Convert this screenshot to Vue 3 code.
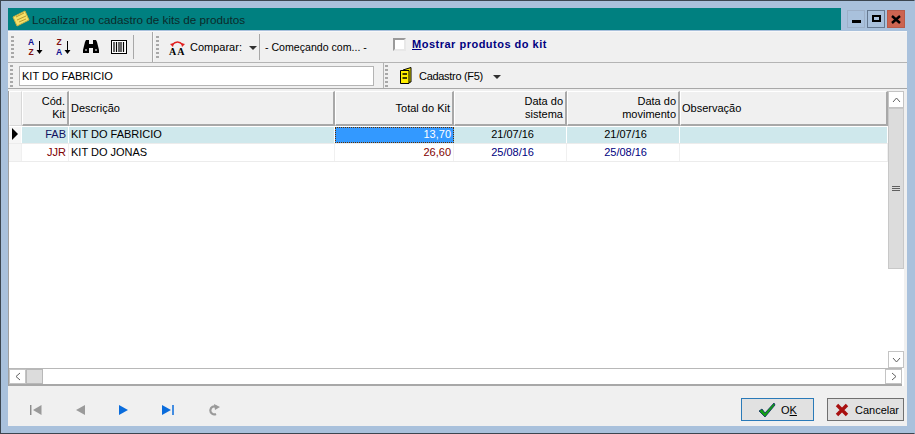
<script setup>
const columns = [
  { key: 'cod', label: ['Cód.', 'Kit'], align: 'right' },
  { key: 'desc', label: ['Descrição'], align: 'left' },
  { key: 'total', label: ['Total do Kit'], align: 'right' },
  { key: 'sis', label: ['Data do', 'sistema'], align: 'right' },
  { key: 'mov', label: ['Data do', 'movimento'], align: 'right' },
  { key: 'obs', label: ['Observação'], align: 'left' }
];

const rows = [
  { cod: 'FAB', desc: 'KIT DO FABRICIO', total: '13,70', sis: '21/07/16', mov: '21/07/16', selected: true },
  { cod: 'JJR', desc: 'KIT DO JONAS', total: '26,60', sis: '25/08/16', mov: '25/08/16', selected: false }
];
</script>

<template>
  <div class="window">
    <div class="titlebar">
      <div class="title">
        <svg class="title-icon" width="18" height="18" viewBox="0 0 18 18">
          <path d="M1 7 L13 1 L17 10 L5 16 Z" fill="#f4e06a" stroke="#c9b040" stroke-width="1" />
          <path d="M4 7 L12 3 M5 10 L14 6 M7 12 L14 9" stroke="#b89a30" stroke-width="1" />
        </svg>
        <span>Localizar no cadastro de kits de produtos</span>
      </div>
      <div class="win-buttons">
        <div class="win-btn"><span class="glyph-min"></span></div>
        <div class="win-btn active"><span class="glyph-max"></span></div>
        <div class="win-btn close">
          <svg width="10" height="9" viewBox="0 0 10 9"><path d="M1 1 L9 8 M9 1 L1 8" stroke="#000" stroke-width="2.4" /></svg>
        </div>
      </div>
    </div>

    <div class="client">
      <div class="toolbar-one">
        <div class="band band-sort">
          <span class="grip"></span>
          <div class="sort-icons">
            <div class="az-icon">
              <div class="az"><span class="blue">A</span><span class="red">Z</span></div>
              <svg width="7" height="15" viewBox="0 0 7 15"><path d="M3.500 1 V11" stroke="#000" /><path d="M0.500 10 H6.500 L3.500 14 Z" fill="#000" /></svg>
            </div>
            <div class="az-icon">
              <div class="az"><span class="red">Z</span><span class="blue">A</span></div>
              <svg width="7" height="15" viewBox="0 0 7 15"><path d="M3.500 1 V11" stroke="#000" /><path d="M0.500 10 H6.500 L3.500 14 Z" fill="#000" /></svg>
            </div>
            <svg width="16" height="14" viewBox="0 0 16 14">
              <path d="M2 2 L3 0 H6 V4 H10 V0 H13 L14 2 L16 10 V13 H10 V8 H6 V13 H0 V10 Z" fill="#000" />
              <path d="M2 10 H4 M12 10 H14" stroke="#fff" />
            </svg>
            <svg width="16" height="14" viewBox="0 0 16 14">
              <rect x="0.5" y="0.5" width="15" height="13" fill="#fff" stroke="#000" />
              <path d="M3 2 V12 M5.5 2 V12 M8 2 V12 M10 2 V12 M12.5 2 V12" stroke="#000" stroke-width="1.2" />
            </svg>
          </div>
        </div>
        <div class="band band-compare">
          <span class="grip"></span>
          <svg class="compare-icon" width="17" height="17" viewBox="0 0 17 17">
            <path d="M3 6 Q8.500 0 14 6" fill="none" stroke="#e02020" stroke-width="1.3" />
            <path d="M1 5 L5 4 L4 8 Z M16 5 L12 4 L13 8 Z" fill="#e02020" />
            <text x="0" y="16" class="aa">A<tspan dx="1">A</tspan></text>
          </svg>
          <span class="compare-label">Comparar:</span>
          <span class="caret compare-caret"></span>
          <span class="divider"></span>
          <span class="compare-mode">- Começando com... -</span>
        </div>
        <label class="check-wrap">
          <span class="check"></span>
          <span class="check-label"><u>M</u>ostrar produtos do kit</span>
        </label>
      </div>

      <div class="toolbar-two">
        <div class="search-band">
          <span class="grip"></span>
          <input class="search" type="text" value="KIT DO FABRICIO" />
        </div>
        <div class="cadastro-band">
          <span class="grip"></span>
          <svg class="cad-icon" width="13" height="17" viewBox="0 0 13 17">
            <path d="M3 3 L11 0.5 V15 L3 16.5 Z" fill="#f2e500" stroke="#000" />
            <path d="M0.5 3.5 H9 V16.5 H0.5 Z" fill="#ffee00" stroke="#000" />
            <path d="M2.5 7 H7 M2.5 11 H7" stroke="#000" stroke-width="1.4" />
          </svg>
          <span class="cad-label">Cadastro (F5)</span>
          <span class="caret"></span>
        </div>
      </div>

      <div class="grid-frame">
        <div class="grid-main">
          <div class="grid-table">
            <div class="grid-row header">
              <div class="indicator head-cell"></div>
              <div v-for="col in columns" :key="col.key" class="head-cell" :class="col.align">
                <span v-for="line in col.label" :key="line">{{ line }}</span>
              </div>
            </div>
            <div v-for="row in rows" :key="row.cod" class="grid-row data" :class="{ selected: row.selected }">
              <div class="indicator cell">
                <svg v-if="row.selected" width="6" height="12" viewBox="0 0 6 12"><path d="M0 0 L6 6 L0 12 Z" fill="#000" /></svg>
              </div>
              <div class="cell right code">{{ row.cod }}</div>
              <div class="cell">{{ row.desc }}</div>
              <div class="cell right total" :class="{ focused: row.selected }">{{ row.total }}</div>
              <div class="cell date">{{ row.sis }}</div>
              <div class="cell date">{{ row.mov }}</div>
              <div class="cell"></div>
            </div>
          </div>
          <div class="vscroll">
            <div class="sb-btn">
              <svg width="9" height="6" viewBox="0 0 9 6"><path d="M1 5 L4.500 1 L8 5" fill="none" stroke="#606060" /></svg>
            </div>
            <div class="v-track">
              <div class="v-thumb"><span></span><span></span><span></span></div>
            </div>
            <div class="sb-btn">
              <svg width="9" height="6" viewBox="0 0 9 6"><path d="M1 1 L4.500 5 L8 1" fill="none" stroke="#606060" /></svg>
            </div>
          </div>
        </div>
        <div class="hscroll">
          <div class="sb-btn h">
            <svg width="6" height="9" viewBox="0 0 6 9"><path d="M5 1 L1 4.500 L5 8" fill="none" stroke="#606060" /></svg>
          </div>
          <div class="h-thumb"></div>
          <div class="h-track"></div>
          <div class="sb-btn h">
            <svg width="6" height="9" viewBox="0 0 6 9"><path d="M1 1 L5 4.500 L1 8" fill="none" stroke="#606060" /></svg>
          </div>
        </div>
      </div>

      <div class="footer">
        <div class="nav">
          <svg width="12" height="10" viewBox="0 0 12 10"><path d="M0.700 0 V10" stroke="#8c8c8c" stroke-width="1.500" /><path d="M11.500 0 V10 L3 5 Z" fill="#9a9a9a" /></svg>
          <svg width="9" height="10" viewBox="0 0 9 10"><path d="M9 0 V10 L0 5 Z" fill="#9a9a9a" /></svg>
          <svg width="9" height="10" viewBox="0 0 9 10"><path d="M0 0 V10 L9 5 Z" fill="#0a6cdc" /></svg>
          <svg width="12" height="10" viewBox="0 0 12 10"><path d="M0 0 V10 L9 5 Z" fill="#0a6cdc" /><path d="M11 0 V10" stroke="#0a6cdc" stroke-width="1.500" /></svg>
          <svg width="12" height="12" viewBox="0 0 12 12"><path d="M8.500 3 A4 4 0 1 0 8 10" fill="none" stroke="#9a9a9a" stroke-width="2.200" /><path d="M6 0 L12 3 L7 6 Z" fill="#9a9a9a" /></svg>
        </div>
        <div class="actions">
          <button class="btn primary" type="button">
            <svg width="18" height="16" viewBox="0 0 18 16"><path d="M1 9 L4 7 L7 11 L16 1 L17 3 L7 15 Z" fill="#12a012" stroke="#0a2a60" stroke-width="0.800" /></svg>
            <span>O<u>K</u></span>
          </button>
          <button class="btn cancel" type="button">
            <svg width="14" height="14" viewBox="0 0 14 14"><path d="M2 2 L12 12 M12 2 L2 12" stroke="#a81010" stroke-width="3.400" /></svg>
            <span>Cancelar</span>
          </button>
        </div>
      </div>
    </div>
  </div>
</template>

<style>
html, body { margin: 0; padding: 0; overflow: hidden; }
</style>

<style scoped>
.window {
  box-sizing: border-box;
  width: 915px;
  height: 434px;
  display: flex;
  flex-direction: column;
  padding: 7px 7px 7px 7px;
  background: #a9c1dc;
  border: 1px solid #3c4650;
  border-right-color: #a9c1dc;
  font-family: "Liberation Sans", sans-serif;
  font-size: 11px;
  color: #000;
}

.titlebar {
  display: flex;
  height: 23px;
  flex: none;
}

.title {
  flex: 1;
  height: 22px;
  display: flex;
  align-items: center;
  gap: 2px;
  padding-left: 4px;
  background: #008080;
  color: #0c2a2a;
  font-size: 11.7px;
}

.win-buttons {
  display: flex;
  gap: 2px;
  padding-left: 6px;
  padding-right: 2px;
}

.win-btn {
  box-sizing: border-box;
  width: 18px;
  height: 18px;
  margin-top: 2px;
  display: flex;
  align-items: center;
  justify-content: center;
  border: 1px solid #9db0c8;
}

.win-btn.active { border-color: #65788f; }
.win-btn.close { background: #cc6450; border-color: #b85a48; }

.glyph-min { width: 9px; height: 3px; margin-top: 5px; background: #000; }
.glyph-max { box-sizing: border-box; width: 9px; height: 7px; margin-bottom: 2px; border: 2px solid #000; }

.client {
  flex: 1;
  min-height: 0;
  display: flex;
  flex-direction: column;
  background: #f0f0f0;
  border-top: 1px solid #f8f8f8;
}

.toolbar-one {
  height: 31px;
  flex: none;
  display: flex;
  border-bottom: 1px solid #b4b4b4;
  box-sizing: border-box;
}

.band { display: flex; align-items: center; height: 30px; }
.band-sort { width: 145px; border-right: 1px solid #a8a8a8; box-sizing: border-box; padding-left: 3px; }
.band-compare { width: 226px; padding-left: 2px; border-left: 1px solid #f8f8f8; }

.grip {
  width: 3px;
  height: 22px;
  flex: none;
  background: repeating-linear-gradient(to bottom, #a8a8a8 0 2px, transparent 2px 4px);
}

.sort-icons { display: flex; align-items: center; gap: 12px; margin-left: 13px; padding-right: 6px; height: 24px; border-right: 1px solid #a8a8a8; }
.az-icon { display: flex; align-items: center; gap: 1px; width: 16px; height: 20px; }
.az { display: flex; flex-direction: column; width: 8px; font-size: 8.5px; font-weight: bold; line-height: 10px; text-align: center; }
.blue { color: #101090; }
.red { color: #801010; }
.aa { font: bold 10px "Liberation Serif", serif; fill: #000; }

.compare-icon { margin-left: 10px; overflow: visible; }
.compare-label { margin-left: 4px; }

.caret {
  width: 0;
  height: 0;
  margin-left: 10px;
  margin-top: 2px;
  border-left: 4px solid transparent;
  border-right: 4px solid transparent;
  border-top: 4px solid #303030;
}

.compare-caret { margin-left: 7px; }
.divider { width: 1px; height: 26px; margin-left: 2px; background: #a8a8a8; }
.compare-mode { margin-left: 5px; white-space: nowrap; font-size: 10.6px; }

.check-wrap { display: flex; align-items: center; height: 24px; margin-left: 11px; }
.check { box-sizing: border-box; width: 13px; height: 13px; background: #fff; border: 2px solid #9a9a9a; border-right-color: #e8e8e8; border-bottom-color: #e8e8e8; }
.check-label { margin-left: 6px; color: #000080; font-weight: bold; letter-spacing: 0.5px; }

.toolbar-two {
  height: 26px;
  flex: none;
  display: flex;
  box-sizing: border-box;
  border-bottom: 1px solid #a8a8a8;
}

.search-band { width: 376px; display: flex; align-items: center; padding-left: 2px; box-sizing: border-box; border-right: 1px solid #b4b4b4; }
.search {
  box-sizing: border-box;
  width: 355px;
  height: 20px;
  margin-left: 6px;
  padding: 0 2px;
  border: 1px solid #b4b4b4;
  font: 11px "Liberation Sans", sans-serif;
  color: #000;
  background: #fff;
  outline: none;
}

.cadastro-band { display: flex; align-items: center; padding-left: 1px; }
.cad-icon { margin: 0 6px 0 12px; }
.cad-label { letter-spacing: -0.3px; }

.grid-frame {
  flex: 1;
  min-height: 0;
  display: flex;
  flex-direction: column;
  margin-top: 2px;
  background: #fff;
  border-left: 1px solid #a0a0a0;
  margin-right: 3px;
}

.grid-main { flex: 1; min-height: 0; display: flex; }
.grid-table { flex: 1; min-width: 0; }

.grid-row {
  display: grid;
  grid-template-columns: 13px 47px 266px 119px 113px 113px 1fr;
}

.header { height: 35px; }

.head-cell {
  box-sizing: border-box;
  display: flex;
  flex-direction: column;
  justify-content: center;
  padding: 0 2px 0 1px;
  background: #f0f0f0;
  line-height: 13px;
  border-right: 2px solid #a8a8a8;
  border-bottom: 2px solid #a8a8a8;
  border-left: 1px solid #fff;
  border-top: 1px solid #fff;
  white-space: nowrap;
}

.indicator.head-cell { border-right: 1px solid #d8d8d8; border-bottom: 1px solid #d8d8d8; }
.head-cell.right { align-items: flex-end; }

.data { height: 18px; border-bottom: 1px solid #ececec; box-sizing: border-box; }
.data.selected { background: #cfe8ec; border-top: 1px solid #fff; }

.cell {
  box-sizing: border-box;
  display: flex;
  align-items: center;
  padding: 0 2px 1px;
  border-right: 1px solid #f0f0f0;
  white-space: nowrap;
}

.indicator.cell { background: #f6f6f6; padding-left: 3px; }
.cell.right { justify-content: flex-end; }
.selected .cell { border-right-color: #fff; padding-bottom: 2px; }
.code { color: #800000; }
.selected .code { color: #101060; }
.total { color: #800000; }
.total.focused { background: #3399ff; color: #fff; border: 1px dotted #603000; }
.date { justify-content: flex-end; padding-right: 32px; color: #000080; }
.selected .date { color: #000; }

.vscroll { width: 16px; flex: none; display: flex; flex-direction: column; background: #fff; }
.sb-btn { box-sizing: border-box; height: 17px; flex: none; display: flex; align-items: center; justify-content: center; background: #fff; border: 1px solid #c4c4c4; }
.sb-btn.h { width: 17px; height: 15px; }
.v-track { flex: 1; background: #fff; display: flex; }
.v-thumb { flex: 1; height: 161px; box-sizing: border-box; background: #dcdcdc; border: 1px solid #c8c8c8; display: flex; flex-direction: column; align-items: center; justify-content: center; gap: 1px; }
.v-thumb span { width: 8px; height: 1px; background: #606060; }

.hscroll { height: 15px; flex: none; display: flex; background: #fff; border-top: 1px solid #b8b8b8; border-bottom: 2px solid #a8a8a8; margin-right: 2px; }
.h-thumb { width: 17px; box-sizing: border-box; background: #dcdcdc; border: 1px solid #b8b8b8; }
.h-track { flex: 1; }

.footer { height: 40px; flex: none; box-sizing: border-box; display: flex; justify-content: space-between; align-items: center; padding: 7px 3px 0 22px; }
.nav { display: flex; align-items: center; gap: 34px; }
.actions { display: flex; gap: 13px; }

.btn {
  box-sizing: border-box;
  height: 23px;
  display: flex;
  align-items: center;
  justify-content: center;
  gap: 5px;
  padding: 0;
  background: #e1e1e1;
  border: 1px solid #707070;
  font: 11px "Liberation Sans", sans-serif;
  color: #000;
}

.btn.primary { width: 73px; border: 1px solid #2a7ab8; }
.btn.cancel { width: 77px; padding-left: 3px; gap: 6px; }
</style>
